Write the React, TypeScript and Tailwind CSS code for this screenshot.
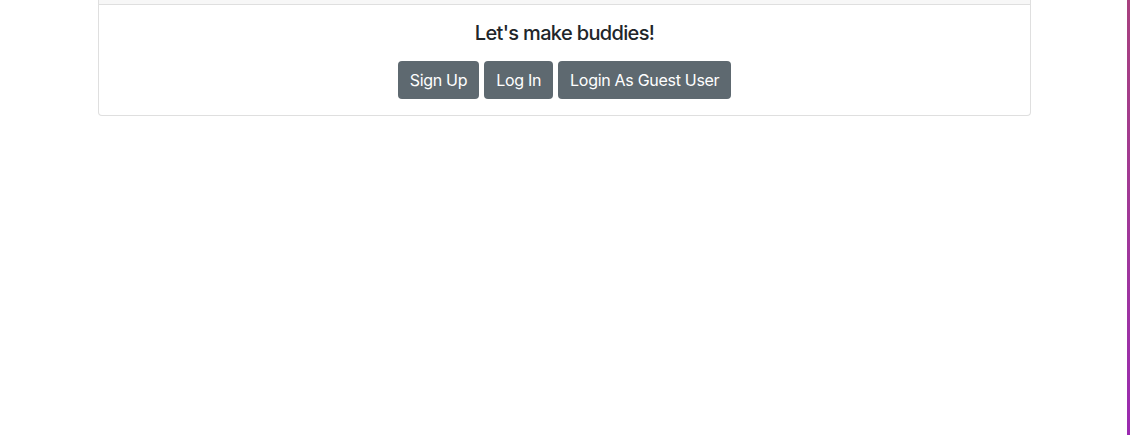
export default function App() {
  return (
    <div className="relative h-[435px] w-[1130px] overflow-hidden bg-white font-['Inter','Liberation_Sans',sans-serif] text-[#212529]">
      {/* card, scrolled so only the header's bottom edge shows */}
      <div className="ml-[98px] w-[933px] rounded-b-[4px] border border-t-0 border-[#dfdfdf]">
        <div className="h-[5px] border-b border-[#dfdfdf] bg-[#f7f7f7]" />
        <div className="flex flex-col items-center p-4">
          <h5 className="text-[20px] leading-[24px] font-medium tracking-[-0.65px]">Let's make buddies!</h5>
          <div className="mt-4 flex gap-[5px]">
            <button className="h-[38px] rounded-[4px] bg-[#5e6970] px-3 text-[16px] tracking-[-0.3px] text-white">Sign Up</button>
            <button className="h-[38px] rounded-[4px] bg-[#5e6970] px-3 text-[16px] tracking-[-0.3px] text-white">Log In</button>
            <button className="h-[38px] rounded-[4px] bg-[#5e6970] px-3 text-[16px] tracking-[-0.3px] text-white">Login As Guest User</button>
          </div>
        </div>
      </div>
      {/* window edge stripe */}
      <div className="absolute top-0 right-0 h-full w-[3px] bg-gradient-to-b from-[#a8407e] to-[#9a2ab0]" />
    </div>
  );
}
